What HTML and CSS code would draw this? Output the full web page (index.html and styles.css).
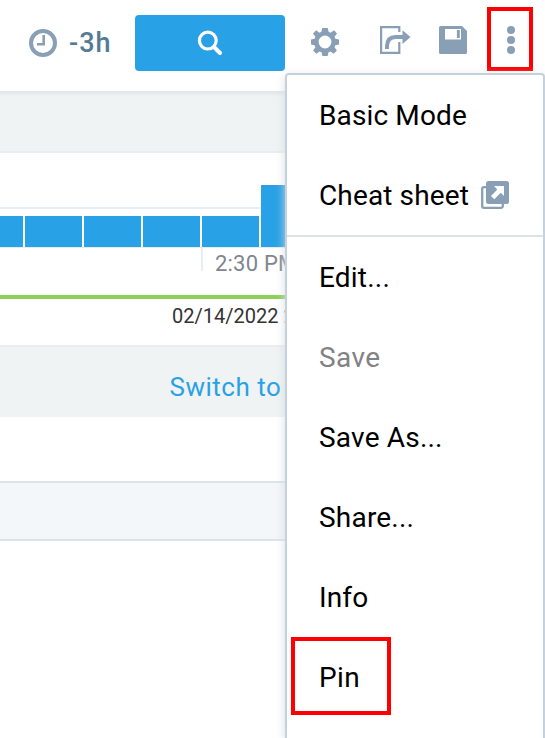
FILE: index.html
```html
<!DOCTYPE html>
<html lang="en">
<head>
<meta charset="utf-8">
<title>Search</title>
<link rel="stylesheet" href="styles.css">
</head>
<body>
<div class="app">
  <header class="toolbar">
    <svg class="clock" width="28" height="28" viewBox="0 0 28 28" fill="none" stroke="#889fb5"><circle cx="14" cy="14" r="12" stroke-width="4"/><path d="M14.700 6v9.200H8" stroke-width="2.600"/></svg>
    <span class="range">-3h</span>
    <button class="search" aria-label="Search"><svg width="26" height="26" viewBox="0 0 26 26" fill="none" stroke="#fff"><circle cx="10.800" cy="10.600" r="8.400" stroke-width="3.200"/><path d="M17 17l6 6" stroke-width="4" stroke-linecap="round"/></svg></button>
    <svg class="gear" width="28" height="28" viewBox="0 0 28 28"><path fill="#889fb5" fill-rule="evenodd" d="M11.200 0h5.600l.8 3.800 2 .9L23 2.300 26 5.500 23.500 8.800l.8 2L28 11.500v5l-3.700.8-.8 2 2.400 3.200-3.200 3.300-3.200-2.300-2 .8-.9 3.700h-5.200l-.8-3.700-2.100-.8-3.200 2.300-3.200-3.200 2.300-3.300-.8-2L0 16.500v-5l3.600-.7.8-2L2 5.500l3.200-3.200 3.200 2.400 2-.9zM14 7.600a6.400 6.400 0 1 0 0 12.800 6.400 6.400 0 0 0 0-12.800z"/></svg>
    <svg class="export" width="31" height="28" viewBox="0 0 31 28"><path d="M19.300 6V1.100H1.100v25.800h18.200V16" fill="none" stroke="#889fb5" stroke-width="2.200"/><path d="M7 23v-3Q7.500 11 15.500 11h8" fill="none" stroke="#889fb5" stroke-width="4"/><path d="M22.500 4.200L30.500 11l-8 7z" fill="#889fb5"/></svg>
    <svg class="disk" width="28" height="28" viewBox="0 0 28 28"><path fill="#889fb5" fill-rule="evenodd" d="M1.500 0h21.500l5 5v21.500a1.500 1.500 0 0 1-1.500 1.500h-25a1.500 1.500 0 0 1-1.500-1.500v-25a1.500 1.500 0 0 1 1.500-1.500zM6 3v10.500h16V3z"/><path fill="#889fb5" d="M17.900 4h2.900v8h-2.900z"/></svg>
    <button class="more" aria-label="More"><i></i><i></i><i></i></button>
  </header>
  <div class="band band-top"></div>
  <section class="chart">
    <div class="plot">
      <div class="bar first"></div><div class="bar"></div><div class="bar"></div><div class="bar"></div><div class="bar"></div><div class="bar tall"></div>
    </div>
    <div class="axis"><span class="tick">2:30 PM</span></div>
    <div class="date">02/14/2022 2:30</div>
  </section>
  <div class="band switch"><a>Switch to</a></div>
  <div class="gap"></div>
  <div class="tabs"></div>
</div>
<nav class="menu">
  <div class="item"><span>Basic Mode</span></div>
  <div class="item"><span>Cheat sheet</span><svg width="28" height="28" viewBox="0 0 28 28"><path d="M5 6.200H3A1.800 1.800 0 0 0 1.200 8v17A1.800 1.800 0 0 0 3 26.800h17a1.800 1.800 0 0 0 1.800-1.800v-2" fill="none" stroke="#889fb5" stroke-width="2.300"/><rect x="5" width="23" height="23" rx="2.500" fill="#889fb5"/><path d="M13 5h10v10l-3.200-3.200-6.500 6.400-3.300-3.300 6.300-6.400z" fill="#fff"/></svg></div>
  <hr>
  <div class="item dots"><span>Edit...</span></div>
  <div class="item disabled"><span>Save</span></div>
  <div class="item dots"><span>Save As...</span></div>
  <div class="item dots"><span>Share...</span></div>
  <div class="item"><span>Info</span></div>
  <div class="item marked"><span>Pin</span></div>
</nav>
</body>
</html>
```
FILE: styles.css
```css
*, *::after { box-sizing: border-box; }
html, body { height: 738px; overflow: hidden; }
body { margin: 0; position: relative; background: #fff; font-family: Roboto, sans-serif; }
svg { display: block; flex: none; }
button { border: 0; padding: 0; margin: 0; }
.toolbar { height: 91px; display: flex; align-items: flex-start; padding-left: 29px; }
.clock { margin-top: 29px; }
.range { width: 66px; margin: 25px 0 0 12px; font: 500 27px/36px Roboto, sans-serif; letter-spacing: 1px; color: #557a94; white-space: nowrap; }
.search { width: 150px; height: 56px; margin-top: 15px; border-radius: 4px; background: #29a1e6; display: flex; align-items: center; justify-content: center; }
.gear { margin: 28px 0 0 26px; }
.export { margin: 26px 0 0 41px; }
.disk { margin: 26px 0 0 28px; }
.more { width: 46px; height: 64px; margin: 7px 0 0 20px; border: 4px solid #f00; background: #fff; display: flex; flex-direction: column; align-items: center; justify-content: center; gap: 2.400px; padding: 2px 0 0 2px; }
.more i { width: 8px; height: 8px; border-radius: 50%; background: #889fb5; }
.band { background: #eff3f4; }
.band-top { height: 62px; border-bottom: 2px solid #e8edf1; background: linear-gradient(#e1e5e7, #eff3f4 6px); }
.chart { height: 192px; }
.plot { height: 95px; display: flex; align-items: flex-end; gap: 2px; border-bottom: 1px solid #e6ebf0; background: linear-gradient(#e8edf2, #e8edf2) 0 54px / 100% 2px no-repeat; }
.bar { flex: none; width: 57px; height: 31px; background: #29a1e6; }
.bar.first { width: 22.500px; }
.bar.tall { height: 62px; }
.axis { height: 51px; padding-left: 201px; border-bottom: 4px solid #8ed056; }
.tick { display: block; height: 23px; padding-left: 12px; border-left: 2px solid #e8edf1; font-size: 22px; line-height: 31px; letter-spacing: .2px; color: #7f858f; white-space: nowrap; }
.date { padding-left: 172px; font-size: 20px; line-height: 34px; letter-spacing: 0; color: #333; white-space: nowrap; }
.switch { height: 72px; border-top: 2px solid #e8edee; padding-left: 169.500px; }
.switch a { font-size: 26px; line-height: 81px; letter-spacing: .5px; color: #29a1e6; }
.gap { height: 64px; }
.tabs { height: 60px; background: #f3f7fa; border: solid #dbe4eb; border-width: 2px 0; }
.menu { position: absolute; left: 285px; top: 73px; width: 260px; height: 665px; background: #fff; border: 2px solid #c5d2de; border-bottom: 0; border-radius: 4px 4px 0 0; box-shadow: 0 3px 10px rgba(212, 217, 220, .95); }
.item { position: relative; height: 80px; display: flex; align-items: center; gap: 12px; padding-left: 32px; font-size: 28px; letter-spacing: .13px; color: #000; white-space: nowrap; }
.dots { letter-spacing: .2px; }
.menu hr { height: 2px; margin: 0; border: 0; background: #dae2e8; }
.disabled { color: #828282; letter-spacing: .4px; }
.marked { letter-spacing: .4px; }
.marked::after { content: ""; position: absolute; left: 4px; top: 0; width: 100px; height: 78px; border: 4px solid #f00; }
```
